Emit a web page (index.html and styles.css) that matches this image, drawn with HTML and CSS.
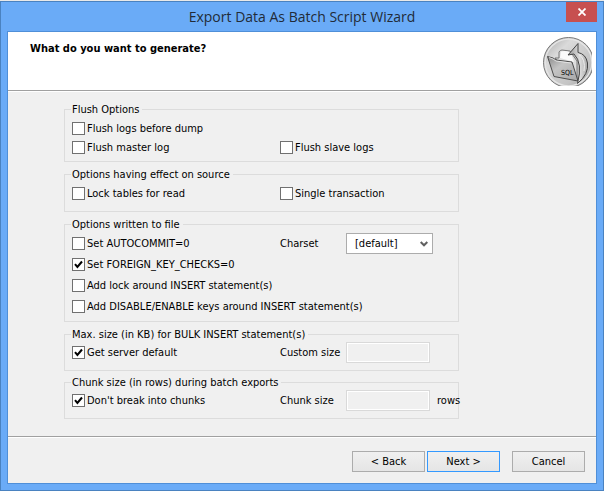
FILE: index.html
```html
<!DOCTYPE html>
<html lang="en">
<head>
<meta charset="utf-8">
<title>Export Data As Batch Script Wizard</title>
<link rel="stylesheet" href="styles.css">
</head>
<body>
<div class="window">
  <header class="titlebar">
    <h1 class="title">Export Data As Batch Script Wizard</h1>
    <button class="close" type="button" aria-label="Close">
      <svg width="8" height="8" viewBox="0 0 8 8"><path d="M0.5 0.5L7.5 7.5M7.5 0.5L0.5 7.5" stroke="#fff" stroke-width="1.8"/></svg>
    </button>
  </header>
  <form class="client">
    <div class="banner">
      <h2 class="question">What do you want to generate?</h2>
      <svg class="logo" width="49" height="49" viewBox="0 0 49 49">
        <defs>
          <linearGradient id="disc" x1="0" y1="0" x2="1" y2="1">
            <stop offset="0" stop-color="#a4a4a4"/><stop offset=".3" stop-color="#dadada"/><stop offset=".7" stop-color="#c4c4c4"/><stop offset="1" stop-color="#999"/>
          </linearGradient>
          <linearGradient id="folder" x1="0" y1="0" x2="1" y2="1">
            <stop offset="0" stop-color="#8a8a8a"/><stop offset=".4" stop-color="#c4c4c4"/><stop offset="1" stop-color="#a8a8a8"/>
          </linearGradient>
          <linearGradient id="arrow" x1="0" y1="0" x2="1" y2="0">
            <stop offset="0" stop-color="#999"/><stop offset=".6" stop-color="#ddd"/><stop offset="1" stop-color="#aaa"/>
          </linearGradient>
        </defs>
        <circle cx="25.5" cy="25.5" r="25" fill="url(#disc)" stroke="#777"/>
        <circle cx="25.5" cy="25.5" r="23.3" fill="none" stroke="#e6e6e6" stroke-width="1.2"/>
        <path d="M12 21L16 21L16 15Q17 13 19 13L27 14L34 24L34 42Z" fill="#ddd" stroke="#777"/>
        <path d="M17 21L18 14.5Q23 13 28 16L31 25Z" fill="#fafafa"/>
        <path d="M4.5 19.5L10 21L13 23L29 25L35 44L11 39.5Z" fill="url(#folder)" stroke="#4c4c4c"/>
        <path d="M6 20.5L10 22L13 24L28 26" fill="none" stroke="#eee" stroke-width=".8"/>
        <path d="M35 6.5L25 18L31 17Q40 26 34.5 46.5Q46 37 44.5 26Q43 17 35 15.5Z" fill="url(#arrow)" stroke="#444" stroke-linejoin="round"/>
        <path d="M35.5 17Q43 22 41 34" fill="none" stroke="#eee"/>
        <text class="logo-text" x="18" y="38">SQL</text>
      </svg>
    </div>
    <main class="options">
      <fieldset class="group">
        <legend>Flush Options</legend>
        <div class="row row-short"><label class="check"><input type="checkbox">Flush logs before dump</label></div>
        <div class="row row-short">
          <label class="check"><input type="checkbox">Flush master log</label>
          <label class="check"><input type="checkbox">Flush slave logs</label>
        </div>
      </fieldset>
      <fieldset class="group group-source">
        <legend>Options having effect on source</legend>
        <div class="row row-short">
          <label class="check"><input type="checkbox">Lock tables for read</label>
          <label class="check"><input type="checkbox">Single transaction</label>
        </div>
      </fieldset>
      <fieldset class="group group-file">
        <legend>Options written to file</legend>
        <div class="row">
          <label class="check"><input type="checkbox">Set AUTOCOMMIT=0</label>
          <div class="field">
            <label for="charset">Charset</label>
            <select id="charset"><option>[default]</option></select>
          </div>
        </div>
        <div class="row"><label class="check"><input type="checkbox" checked>Set FOREIGN_KEY_CHECKS=0</label></div>
        <div class="row"><label class="check"><input type="checkbox">Add lock around INSERT statement(s)</label></div>
        <div class="row"><label class="check wide"><input type="checkbox">Add DISABLE/ENABLE keys around INSERT statement(s)</label></div>
      </fieldset>
      <fieldset class="group group-size">
        <legend>Max. size (in KB) for BULK INSERT statement(s)</legend>
        <div class="row">
          <label class="check"><input type="checkbox" checked>Get server default</label>
          <div class="field">
            <label for="custom">Custom size</label>
            <input id="custom" class="number" type="text" disabled>
          </div>
        </div>
      </fieldset>
      <fieldset class="group group-size">
        <legend>Chunk size (in rows) during batch exports</legend>
        <div class="row">
          <label class="check"><input type="checkbox" checked>Don't break into chunks</label>
          <div class="field">
            <label for="chunk">Chunk size</label>
            <input id="chunk" class="number" type="text" disabled>
            <span class="unit">rows</span>
          </div>
        </div>
      </fieldset>
    </main>
    <footer class="actions">
      <button class="btn" type="button">&lt; Back</button>
      <button class="btn btn-default" type="button">Next &gt;</button>
      <button class="btn btn-cancel" type="button">Cancel</button>
    </footer>
  </form>
</div>
</body>
</html>
```
FILE: styles.css
```css
* { box-sizing: border-box; }

body {
  margin: 0;
  padding-top: 1px;
  background: #e9e9e9;
  color: #000;
  font: 11px/15px "DejaVu Sans Condensed", "Noto Sans", sans-serif;
}

input, select, button { font: inherit; color: inherit; }

.window {
  display: flex;
  flex-direction: column;
  min-height: calc(100vh - 1px);
  padding: 0 6px 6px;
  border: 1px solid #4a82c0;
  background: #6aabf7;
}

.titlebar {
  display: grid;
  grid-template-columns: 31px 1fr 31px;
  height: 29px;
}

.title {
  grid-column: 2;
  margin: 0;
  color: #222b38;
  font: 14px/29px "Open Sans", "Noto Sans", sans-serif;
  text-align: center;
}

.close {
  display: flex;
  align-items: center;
  justify-content: center;
  width: 31px;
  height: 20px;
  padding: 0;
  border: 0;
  background: #c75050;
}

.client {
  display: flex;
  flex: 1;
  flex-direction: column;
  border: 1px solid #4f8fd8;
  background: #f0f0f0;
}

.banner {
  display: flex;
  justify-content: space-between;
  height: 60px;
  padding: 5px 4px 0 22px;
  border-bottom: 1px solid #fff;
  background: #fff;
  box-shadow: inset 0 -1px #a0a0a0;
}

.question {
  margin: 4px 0 0;
  font-size: 11px;
  font-weight: bold;
  line-height: 16px;
}

.logo-text { font: 7px "DejaVu Sans Condensed", sans-serif; }

.options {
  flex: 1;
  padding: 10px 137px 13px 56px;
}

.group {
  min-width: 0;
  margin: 0 0 5px;
  padding: 2px 7px 4px;
  border: 1px solid #dcdcdc;
}

.group-source { padding-bottom: 8px; }
.group-file { padding-top: 1px; }

.group-size {
  margin-bottom: 4px;
  padding-top: 0;
  padding-bottom: 7px;
}

legend {
  margin-left: -1px;
  padding: 0 3px 0 1px;
}

.row {
  display: grid;
  grid-template-columns: 208px 1fr;
  align-items: center;
  height: 21px;
}

.row-short { height: 19px; }

.check {
  display: flex;
  align-items: center;
  gap: 2px;
  white-space: nowrap;
}

.wide { grid-column: 1 / 3; }

.check input {
  appearance: none;
  width: 13px;
  height: 13px;
  margin: 0;
  border: 1px solid #707070;
  background: #fff;
}

.check input:checked {
  background: #fff url("data:image/svg+xml,%3Csvg xmlns='http://www.w3.org/2000/svg' viewBox='0 0 11 11'%3E%3Cpath d='M2 5.2L4.4 8L9 2.5' fill='none' stroke='%23000' stroke-width='2'/%3E%3C/svg%3E");
}

.field {
  display: grid;
  grid-template-columns: 66px 87px;
  align-items: center;
}

.field:has(.number) { grid-template-columns: 66px 84px 1fr; }

select {
  appearance: none;
  height: 21px;
  padding: 0 8px;
  border: 1px solid #acacac;
  border-radius: 0;
  background: #fff url("data:image/svg+xml,%3Csvg xmlns='http://www.w3.org/2000/svg' width='8' height='6' viewBox='0 0 8 6'%3E%3Cpath d='M0.7 1L4 4.3L7.3 1' fill='none' stroke='%23606060' stroke-width='2'/%3E%3C/svg%3E") no-repeat right 4px center;
}

.number {
  width: 100%;
  height: 21px;
  padding: 0 3px;
  border: 1px solid #d9d9d9;
  background: #f0f0f0;
  box-shadow: inset 0 0 0 1px #fff;
}

.unit { padding-left: 7px; }

.actions {
  display: flex;
  justify-content: flex-end;
  gap: 2px;
  padding: 14px 11px 11px;
  border-top: 1px solid #a0a0a0;
  box-shadow: inset 0 1px #fff;
}

.btn {
  width: 73px;
  height: 21px;
  padding: 0;
  border: 1px solid #acacac;
  background: linear-gradient(#f0f0f0, #e5e5e5);
}

.btn-default { border-color: #3399ff; }
.btn-cancel { margin-left: 10px; }
```
